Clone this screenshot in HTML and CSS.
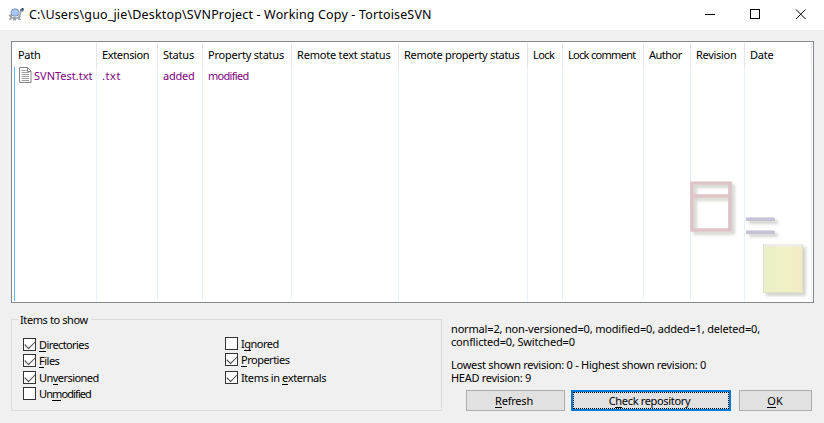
FILE: index.html
```html
<!DOCTYPE html>
<html lang="en">
<head>
<meta charset="utf-8">
<title>Working Copy - TortoiseSVN</title>
<link rel="stylesheet" href="styles.css">
</head>
<body>
<div class="window">
  <header class="titlebar">
    <svg class="app-icon" width="16" height="14" viewBox="0 0 16 14">
      <path d="M.5 8 4 7v4l-1 2H1l1-2.500zM5 10h3.500l-.5 3.500H5zM10 9l3-.5-1 2.500 1 2h-3z" fill="#a4a4a6"/>
      <path d="M3 10c2 2 7 2 8-.5l1.500-3 .5-3" stroke="#9aa3ad" stroke-width="1.500" fill="none"/>
      <ellipse cx="7" cy="5.500" rx="4" ry="3.700" fill="#a9c8f8" stroke="#8793b0"/>
      <path d="M12 2h3.500v2.500H12z" fill="#7d8fa0"/>
      <path d="M13.500 1h2v2.500h-2z" fill="#244a68"/>
    </svg>
    <h1 class="title">C:\Users\guo_jie\Desktop\SVNProject - Working Copy - TortoiseSVN</h1>
    <svg class="controls" width="102" height="11" viewBox="0 0 102 11" fill="none" stroke="#000" shape-rendering="crispEdges">
      <path d="M0 5.500h10M45.500.500h9v9h-9z"/>
      <path d="M91 .5l9.500 9.500M100.500.500 91 10" shape-rendering="auto"/>
    </svg>
  </header>
  <main class="content">
    <section class="list">
      <div class="col c-path"><div class="th">Path</div><div class="td"><svg class="file" width="13" height="16" viewBox="0 0 13 16"><path d="M.5.500h8l3.500 3.500v11.500H.5z" fill="#fff" stroke="#858585"/><path d="M8.500.500v4H12" fill="none" stroke="#858585"/><path d="M2.500 3.500h5M2.500 5.500h7.500M2.500 7.500H10M2.500 9.500H10M2.500 11.500H10M2.500 13.500H10" stroke="#a0a0a0"/></svg><span>SVNTest.txt</span></div></div>
      <div class="col c-ext"><div class="th">Extension</div><div class="td">.txt</div></div>
      <div class="col c-status"><div class="th">Status</div><div class="td">added</div></div>
      <div class="col c-prop"><div class="th">Property status</div><div class="td">modified</div></div>
      <div class="col c-rtext"><div class="th">Remote text status</div></div>
      <div class="col c-rprop"><div class="th">Remote property status</div></div>
      <div class="col c-lock"><div class="th">Lock</div></div>
      <div class="col c-comment"><div class="th">Lock comment</div></div>
      <div class="col c-author"><div class="th">Author</div></div>
      <div class="col c-rev"><div class="th">Revision</div></div>
      <div class="col c-date"><div class="th">Date</div></div>
      <svg class="watermark" width="124" height="122" viewBox="0 0 124 122">
        <defs>
          <filter id="soft" x="-20%" y="-20%" width="150%" height="150%"><feDropShadow dx="3" dy="3" stdDeviation="1.500" flood-color="#777766" flood-opacity=".32"/></filter>
          <linearGradient id="note"><stop offset="0" stop-color="#eaf0c8"/><stop offset=".55" stop-color="#f0f0c4"/><stop offset="1" stop-color="#f4ebc4"/></linearGradient>
        </defs>
        <g filter="url(#soft)">
          <path d="M3 3h38v47H3zM3 16h38" fill="none" stroke="#dec3c7" stroke-width="3.700" stroke-linejoin="round"/>
          <path d="M1 1.500h42" stroke="#e5e0dd"/>
          <path d="M57 39.500h29M57 52.500h29" stroke="#c5c3d8" stroke-width="3"/>
          <path d="M57 37.500h28M57 50.500h28" stroke="#dadae0"/>
          <path d="M74 64h40v49H74z" fill="url(#note)"/>
          <path d="M74 65.500h40" stroke="#eeeee5" stroke-width="3"/>
          <path d="M74.500 64v49M113.500 64v49M74 112.500h40" stroke="#dfe0c4"/>
        </g>
      </svg>
    </section>
    <section class="bottom">
      <fieldset class="group">
        <legend>Items to show</legend>
        <div class="checks left">
          <label><i class="box on"></i><span class="w-directories"><u>D</u>irectories</span></label>
          <label><i class="box on"></i><span class="w-files"><u>F</u>iles</span></label>
          <label class="gap"><i class="box on"></i><span class="w-unversioned">Un<u>v</u>ersioned</span></label>
          <label><i class="box"></i><span class="w-unmodified">Un<u>m</u>odified</span></label>
        </div>
        <div class="checks right">
          <label><i class="box"></i><span class="w-ignored">I<u>g</u>nored</span></label>
          <label><i class="box on"></i><span class="w-properties"><u>P</u>roperties</span></label>
          <label class="gap"><i class="box on"></i><span class="w-externals">Items in <u>e</u>xternals</span></label>
        </div>
      </fieldset>
      <div class="side">
        <div class="stats">
          <div class="counts">normal=2, non-versioned=0, modified=0, added=1, deleted=0,<br>conflicted=0, Switched=0</div>
          <div class="revisions">Lowest shown revision: 0 - Highest shown revision: 0<br>HEAD revision: 9</div>
        </div>
        <div class="buttons">
          <button class="b-refresh"><u>R</u>efresh</button>
          <button class="b-check"><span>C<u>h</u>eck repository</span></button>
          <button class="b-ok"><u>O</u>K</button>
        </div>
      </div>
    </section>
  </main>
</div>
</body>
</html>
```
FILE: styles.css
```css
* { box-sizing: border-box; }
body { margin: 0; font: 11px/13px "Noto Sans", "Open Sans", sans-serif; color: #000; background: #f0f0f0; white-space: nowrap; }
.window { width: 824px; height: 423px; overflow: hidden; }
.titlebar { height: 30px; background: #fff; display: flex; align-items: flex-start; padding-left: 8px; }
.app-icon { margin-top: 7px; }
.title { margin: 6px 0 0 5px; width: 676px; font-size: 12.5px; letter-spacing: .16px; line-height: 18px; font-weight: 400; }
.controls { margin-top: 9px; }
.content { padding: 11px 10px 0 11px; }
.list { position: relative; width: 803px; height: 262px; background: #fff; border: 1px solid #828790; display: flex; padding: 1px 0 1px 2px; }
.col { background: linear-gradient(#e5e5e5 24px, #e8f2fe 24px) right / 1px 100% no-repeat; }
.c-path { position: relative; width: 83px; letter-spacing: -.3px; }
.c-path .td { letter-spacing: 0; }
.c-path::before { content: ""; position: absolute; left: 0; top: 24px; bottom: 0; width: 1px; background: #6ab4f0; }
.c-ext { width: 61px; letter-spacing: -.35px; }
.c-ext .td { letter-spacing: .6px; }
.c-status { width: 45px; letter-spacing: -.2px; }
.c-prop { width: 89px; letter-spacing: -.2px; }
.c-prop .td { letter-spacing: -.7px; }
.c-rtext { width: 107px; letter-spacing: -.2px; }
.c-rprop { width: 129px; letter-spacing: -.3px; }
.c-lock { width: 35px; letter-spacing: -.55px; }
.c-comment { width: 81px; letter-spacing: -.7px; }
.c-author { width: 47px; letter-spacing: -.5px; }
.c-rev { width: 54px; letter-spacing: -.3px; }
.c-date { width: 67px; letter-spacing: -.2px; }
.th { height: 24px; line-height: 24px; padding-left: 5px; }
.c-path .th { padding-left: 4px; }
.td { height: 17px; line-height: 18px; padding-left: 5px; color: #800080; display: flex; }
.file { flex: none; margin: 0 2px 0 0; }
.watermark { position: absolute; right: 0; bottom: 0; }
.bottom { display: flex; padding-top: 10px; }
.group { margin: 0; padding: 0; width: 431px; height: 98px; border: 1px solid #dcdcdc; display: flex; }
legend { margin-left: 6px; padding: 0 3px 0 2px; letter-spacing: -.4px; }
.checks { padding: 12px 0 0 11px; width: 202px; }
.checks.right { padding-top: 11px; }
.checks label { display: flex; height: 13px; margin-bottom: 3px; line-height: 14px; }
.checks label.gap { margin-top: 4px; }
.checks.right label.gap { margin-top: 5px; }
.box { width: 13px; height: 13px; margin-right: 3px; border: 1px solid #333; background: #fff; display: flex; justify-content: center; }
.box.on::after { content: ""; width: 9px; height: 5px; margin-top: 2px; border: solid #444; border-width: 0 0 1.5px 1.5px; transform: translateY(-.5px) rotate(-45deg); }
.w-directories { letter-spacing: -.6px; }
.w-files { letter-spacing: -.5px; }
.w-unversioned { letter-spacing: -.55px; }
.w-unmodified { letter-spacing: -.9px; }
.w-ignored, .w-properties { letter-spacing: -.5px; }
.w-externals { letter-spacing: -.42px; }
u { text-decoration: none; border-bottom: 1px solid currentColor; display: inline-block; line-height: 12px; height: 13px; }
.side { padding-left: 9px; }
.stats { padding-top: 9px; }
.counts { letter-spacing: -.17px; }
.revisions { margin-top: 10px; letter-spacing: -.28px; }
.buttons { display: flex; padding: 6px 0 0 15px; }
button { height: 21px; padding: 0; border: 1px solid #adadad; background: #e1e1e1; font: inherit; color: #000; }
.b-refresh { width: 99px; padding-right: 3px; letter-spacing: -.2px; }
.b-check { width: 160px; margin: 0 8px 0 6px; padding-right: 3px; border: 2px solid #0078d7; outline: 1px dotted #000; outline-offset: -3px; letter-spacing: -.33px; }
.b-ok { width: 73px; padding-right: 1px; }
```
